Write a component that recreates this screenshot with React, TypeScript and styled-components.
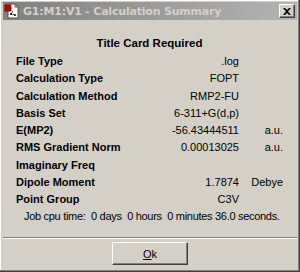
import styled, { createGlobalStyle } from 'styled-components';

const GlobalStyle = createGlobalStyle`
  html, body {
    margin: 0;
    padding: 0;
    background: #d4d0c8;
  }
  body {
    font-family: 'Liberation Sans', Arial, sans-serif;
  }
`;

interface Row {
  label: string;
  value?: string;
  unit?: string;
}

const rows: Row[] = [
  { label: 'File Type', value: '.log' },
  { label: 'Calculation Type', value: 'FOPT' },
  { label: 'Calculation Method', value: 'RMP2-FU' },
  { label: 'Basis Set', value: '6-311+G(d,p)' },
  { label: 'E(MP2)', value: '-56.43444511', unit: 'a.u.' },
  { label: 'RMS Gradient Norm', value: '0.00013025', unit: 'a.u.' },
  { label: 'Imaginary Freq' },
  { label: 'Dipole Moment', value: '1.7874', unit: 'Debye' },
  { label: 'Point Group', value: 'C3V' },
];

const DocIcon = () => (
  <svg width="16" height="16" viewBox="0 0 16 16">
    <path d="M4 1h7l3 3v11H4z" fill="#fff" stroke="#555" strokeWidth="1" />
    <path d="M11 1v3h3" fill="none" stroke="#555" strokeWidth="1" />
    <rect x="1" y="2" width="6" height="6" fill="#c00000" stroke="#600" strokeWidth="0.8" />
    <circle cx="7" cy="11" r="1.1" fill="#222" />
    <circle cx="11" cy="12" r="1.1" fill="#222" />
    <path d="M7 11l4 1M9 8l-2 3" stroke="#222" strokeWidth="0.8" />
  </svg>
);

const App = () => {
  return (
    <>
      <GlobalStyle />
      <Window>
        <TitleBar>
          <DocIcon />
          <TitleText>G1:M1:V1 - Calculation Summary</TitleText>
          <CloseButton>
            <svg width="8" height="7" viewBox="0 0 8 7">
              <path d="M0 0h2l2 2 2-2h2L5 3.5 8 7H6L4 5 2 7H0l3-3.5z" fill="#000" />
            </svg>
          </CloseButton>
        </TitleBar>
        <Body>
          <Heading>Title Card Required</Heading>
          <Grid>
            {rows.map((r) => (
              <GridRow key={r.label}>
                <Label>{r.label}</Label>
                <Value>{r.value}</Value>
                <Unit>{r.unit}</Unit>
              </GridRow>
            ))}
          </Grid>
          <CpuTime>{'Job cpu time:  0 days  0 hours  0 minutes 36.0 seconds.'}</CpuTime>
        </Body>
        <Separator />
        <Footer>
          <Button>
            <u>O</u>k
          </Button>
        </Footer>
      </Window>
    </>
  );
};

export default App;

const Window = styled.div`
  width: 300px;
  height: 272px;
  box-sizing: border-box;
  display: flex;
  flex-direction: column;
  background: #d4d0c8;
  border-right: 1px solid #404040;
  border-bottom: 1px solid #404040;
  box-shadow: inset -1px -1px 0 #808080, inset 1px 1px 0 #ffffff;
  padding: 2px 2px 2px 3px;
`;

const TitleBar = styled.div`
  height: 18px;
  display: flex;
  align-items: center;
  gap: 3px;
  padding: 0 2px 0 1px;
  background: linear-gradient(to right, #808080, #b4b4b4);
`;

const TitleText = styled.span`
  flex: 1;
  color: #d4d0c8;
  font-family: 'DejaVu Sans', sans-serif;
  font-weight: bold;
  font-size: 11px;
  letter-spacing: -0.2px;
  white-space: nowrap;
`;

const CloseButton = styled.div`
  width: 16px;
  height: 14px;
  box-sizing: border-box;
  display: flex;
  align-items: center;
  justify-content: center;
  background: #d4d0c8;
  border-top: 1px solid #fff;
  border-left: 1px solid #fff;
  border-right: 1px solid #404040;
  border-bottom: 1px solid #404040;
  box-shadow: inset -1px -1px 0 #808080;
`;

const Body = styled.div`
  flex: 1;
  padding: 14px 14px 0 13px;
  font-size: 11px;
  color: #000;
`;

const Heading = styled.div`
  text-align: center;
  font-weight: bold;
  font-size: 11.5px;
  height: 18px;
  line-height: 18px;
  margin-bottom: 1px;
`;

const Grid = styled.div`
  display: grid;
  grid-template-columns: 1fr 100px 44px;
  grid-auto-rows: 17.25px;
`;

const GridRow = styled.div`
  display: contents;
`;

const Label = styled.span`
  font-weight: bold;
  line-height: 17px;
  white-space: nowrap;
`;

const Value = styled.span`
  text-align: right;
  line-height: 17px;
`;

const Unit = styled.span`
  text-align: right;
  line-height: 17px;
`;

const CpuTime = styled.div`
  padding-left: 8px;
  line-height: 17px;
  white-space: pre;
  letter-spacing: -0.3px;
`;

const Separator = styled.div`
  height: 0;
  border-top: 1px solid #808080;
  border-bottom: 1px solid #ffffff;
`;

const Footer = styled.div`
  display: flex;
  justify-content: center;
  padding: 3px 0 4px;
`;

const Button = styled.div`
  width: 76px;
  height: 23px;
  box-sizing: border-box;
  display: flex;
  align-items: center;
  justify-content: center;
  font-size: 11px;
  border-top: 1px solid #fff;
  border-left: 1px solid #fff;
  border-right: 1px solid #404040;
  border-bottom: 1px solid #404040;
  box-shadow: inset -1px -1px 0 #808080;
`;
